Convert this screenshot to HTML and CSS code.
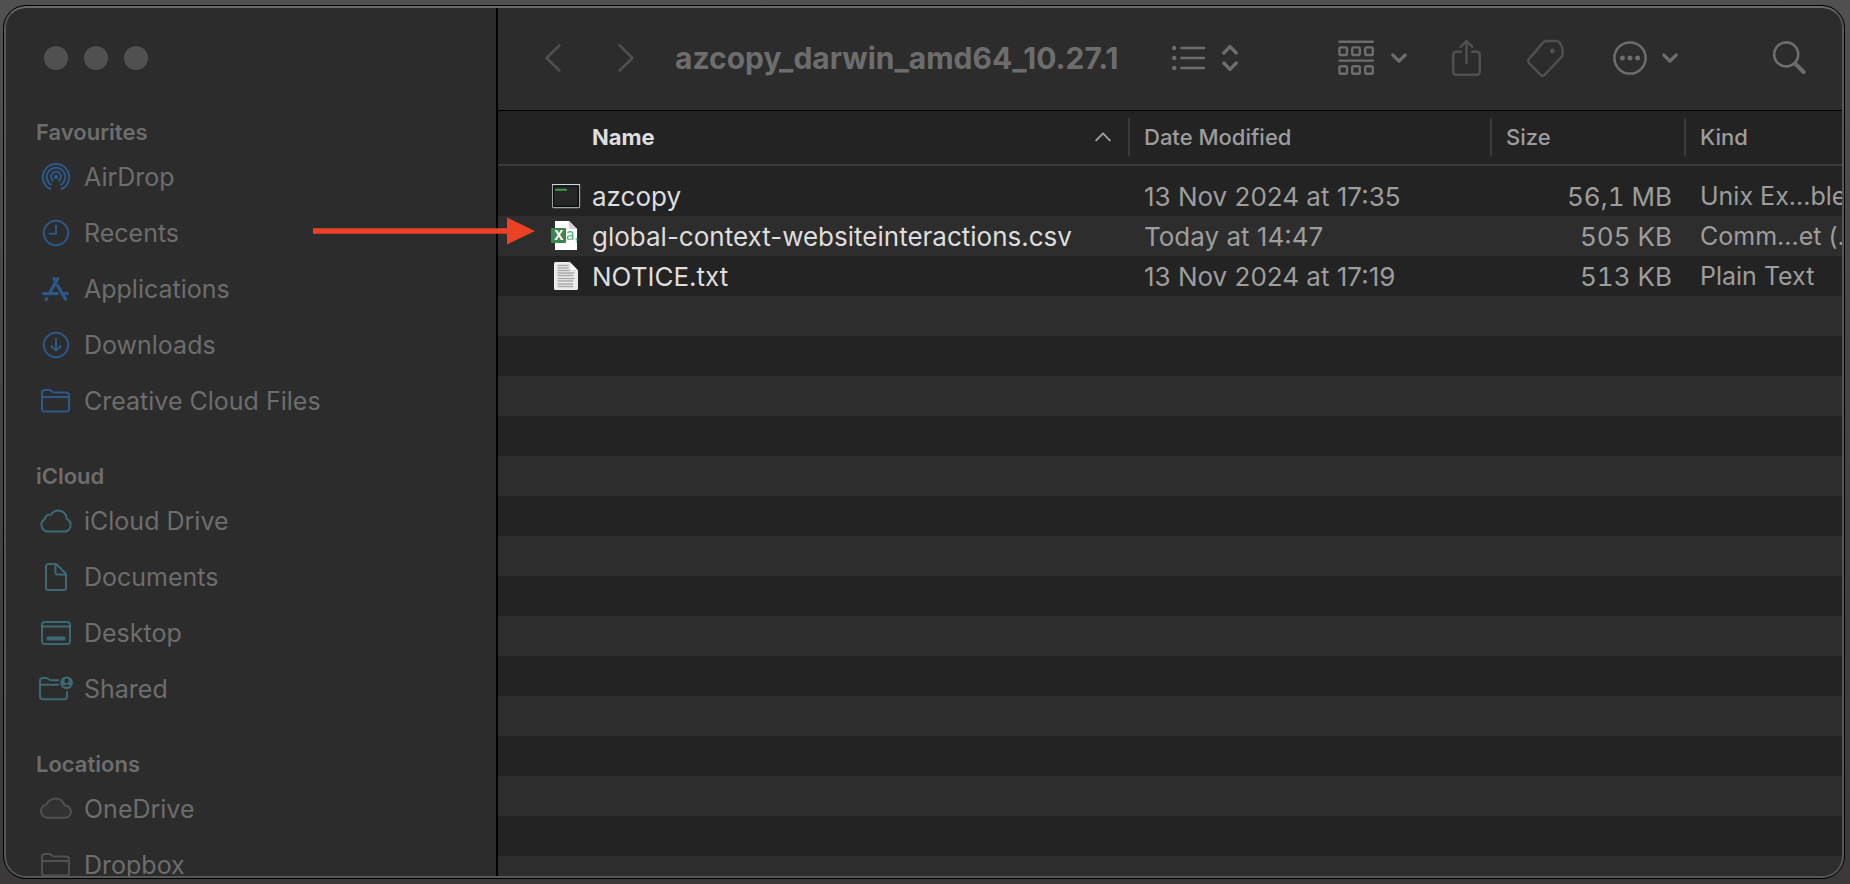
FILE: index.html
```html
<!DOCTYPE html>
<html lang="en">
<head>
<meta charset="utf-8">
<title>azcopy_darwin_amd64_10.27.1</title>
<link rel="stylesheet" href="styles.css">
</head>
<body>
<div class="window">
  <aside class="sidebar">
    <div class="traffic">
      <button class="light" type="button" aria-label="Close"></button>
      <button class="light" type="button" aria-label="Minimise"></button>
      <button class="light" type="button" aria-label="Zoom"></button>
    </div>
    <nav class="places">
      <section class="group blue">
        <h2 class="group-title">Favourites</h2>
        <a class="place" href="#"><svg class="place-icon" width="36" height="32" viewBox="0 0 36 32"><circle cx="18" cy="16" r="2.2" fill="currentColor" stroke="none"/><path d="M14.8 20a5 5 0 1 1 6.4 0M13 24.1a9.2 9.2 0 1 1 10 0M12.2 28.4a13.2 13.2 0 1 1 11.6 0" transform="translate(0 -.4)"/></svg>AirDrop</a>
        <a class="place" href="#"><svg class="place-icon" width="36" height="32" viewBox="0 0 36 32"><circle cx="18" cy="16" r="12.2"/><path d="M18 8.2v8.6h-6.6"/></svg>Recents</a>
        <a class="place" href="#"><svg class="place-icon" width="36" height="32" viewBox="0 0 36 32"><g stroke-width="3.2" stroke-linecap="round"><path d="M19.8 5.6 12 19.4M5.6 20.6h13.8M24.4 20.6h5M9 25.6 8 26.6M16 5.6l1.2 2"/><path d="m19.6 12.6 8 13.6"/></g></svg>Applications</a>
        <a class="place" href="#"><svg class="place-icon" width="36" height="32" viewBox="0 0 36 32"><circle cx="18" cy="16" r="12.2"/><path d="M18 10v11.4M13.2 17l4.8 4.6 4.8-4.6"/></svg>Downloads</a>
        <a class="place" href="#"><svg class="place-icon" width="36" height="32" viewBox="0 0 36 32"><path d="M4 24.6V7.6Q4 5 6.600 5H11Q12.400 5 13.400 6L14 6.600Q14.800 7.400 16 7.400H28.400Q31 7.400 31 10V24Q31 26.600 28.400 26.600H6.600Q4 26.600 4 24.600ZM4 12H31"/></svg>Creative Cloud Files</a>
      </section>
      <section class="group teal">
        <h2 class="group-title">iCloud</h2>
        <a class="place" href="#"><svg class="place-icon" width="36" height="32" viewBox="0 0 36 32"><path d="M9 26.400A6.600 6.600 0 0 1 7 14Q7.400 9.600 13.200 9.600Q15.600 5.400 20.200 5.400Q28.400 6 28.800 14.200A6.400 6.400 0 0 1 27.200 26.400Z"/></svg>iCloud Drive</a>
        <a class="place" href="#"><svg class="place-icon" width="36" height="32" viewBox="0 0 36 32"><path d="M10.600 3H18.200L28 12.800V26.400Q28 29 25.400 29H10.600Q8 29 8 26.400V5.600Q8 3 10.600 3ZM17.400 3V11.600Q17.400 13.400 19.200 13.400H28"/></svg>Documents</a>
        <a class="place" href="#"><svg class="place-icon" width="36" height="32" viewBox="0 0 36 32"><rect x="4" y="5" width="28" height="22" rx="3"/><path d="M4 9.600H32"/><rect x="8.600" y="19.400" width="18.800" height="4.200" rx="1" fill="currentColor" stroke="none"/></svg>Desktop</a>
        <a class="place" href="#"><svg class="place-icon" width="36" height="32" viewBox="0 0 36 32"><path d="M20.400 7.200H13Q11.600 7.200 10.800 6.400Q9.400 5 8 5H4.600Q2 5 2 7.600V23.800Q2 26.200 4.600 26.200H26.600Q29 26.200 29 23.600V19M2 11.800H20.400"/><circle cx="28.600" cy="9.800" r="6.400" fill="currentColor" stroke="none"/><circle cx="28.600" cy="7.800" r="2.200" fill="#2c2c2c" stroke="none"/><path d="M24.600 13.400Q28.600 9.400 32.600 13.400Z" fill="#2c2c2c" stroke="none"/></svg>Shared</a>
      </section>
      <section class="group grey">
        <h2 class="group-title">Locations</h2>
        <a class="place" href="#"><svg class="place-icon" width="36" height="32" viewBox="0 0 36 32"><path d="M9 24.800A6.800 6.800 0 0 1 8.400 11.400Q11.600 5.400 17.800 5.400Q24.600 5.600 26.800 12.600A6.100 6.100 0 0 1 27 24.800Z" fill="#323232"/></svg>OneDrive</a>
        <a class="place" href="#"><svg class="place-icon" width="36" height="32" viewBox="0 0 36 32"><path d="M4 24.6V7.6Q4 5 6.600 5H11Q12.400 5 13.400 6L14 6.600Q14.800 7.400 16 7.400H28.400Q31 7.400 31 10V24Q31 26.600 28.400 26.600H6.600Q4 26.600 4 24.600ZM4 12H31"/></svg>Dropbox</a>
      </section>
    </nav>
  </aside>
  <main class="main">
    <header class="toolbar">
      <div class="history">
        <button class="tool dim" type="button" aria-label="Back"><svg width="18" height="30" viewBox="0 0 18 30"><path d="M15.400 2.400 2.600 15l12.800 12.600" stroke-width="2.600"/></svg></button>
        <button class="tool dim" type="button" aria-label="Forward"><svg width="18" height="30" viewBox="0 0 18 30"><path d="M2.600 2.400 15.400 15 2.600 27.600" stroke-width="2.600"/></svg></button>
      </div>
      <h1 class="title">azcopy_darwin_amd64_10.27.1</h1>
      <button class="tool view" type="button" aria-label="View as list">
        <svg width="35" height="30" viewBox="0 0 35 30"><g fill="currentColor" stroke="none"><circle cx="3.200" cy="5" r="2.200"/><circle cx="3.200" cy="15" r="2.200"/><circle cx="3.200" cy="25" r="2.200"/></g><path d="M10.400 5H33M10.400 15H33M10.400 25H33" stroke-width="2.400"/></svg>
        <svg width="18" height="30" viewBox="0 0 18 30"><path d="m2.800 10 6.200-6.400L15.200 10M2.800 20l6.200 6.400L15.200 20" stroke-width="3.400"/></svg>
      </button>
      <button class="tool arrange" type="button" aria-label="Group by">
        <svg width="37" height="36" viewBox="0 0 37 36"><path d="M1.400 1.800H35M1.400 20.600H35" stroke-width="2.400"/><g stroke-width="2.400"><rect x="1.400" y="7.400" width="7.600" height="7.600" rx="1.600"/><rect x="14.200" y="7.400" width="7.600" height="7.600" rx="1.600"/><rect x="27.200" y="7.400" width="7.600" height="7.600" rx="1.600"/><rect x="1.400" y="26.200" width="7.600" height="7.600" rx="1.600"/><rect x="14.200" y="26.200" width="7.600" height="7.600" rx="1.600"/><rect x="27.200" y="26.200" width="7.600" height="7.600" rx="1.600"/></g></svg>
        <svg width="18" height="12" viewBox="0 0 18 12"><path d="m2.800 3 6.200 6.200L15.200 3" stroke-width="3.200"/></svg>
      </button>
      <button class="tool dim share" type="button" aria-label="Share"><svg width="31" height="38" viewBox="0 0 31 38"><path d="M10 12.800H5.400Q2.200 12.800 2.200 16V32.600Q2.200 35.800 5.400 35.800H25.600Q28.800 35.800 28.800 32.600V16Q28.800 12.800 25.600 12.800H21M15.500 24V2.400M9.600 7.800l5.900-5.800 5.900 5.800" stroke-width="2.400"/></svg></button>
      <button class="tool dim tag" type="button" aria-label="Edit tags"><svg width="39" height="40" viewBox="0 0 39 40"><path d="M20 3H30Q32 3 33.400 4.400L35.400 8Q36.600 9.600 36.600 12V16.400Q36.600 18 35.200 19.400L18.400 37Q16.600 38.400 14.800 37L2.800 24.800Q1.400 23 2.800 21.200L17.200 4.400Q18.400 3 20 3Z" stroke-width="2.400"/><circle cx="26.400" cy="13" r="2.400" fill="currentColor" stroke="none"/></svg></button>
      <button class="tool more" type="button" aria-label="Actions">
        <svg width="36" height="36" viewBox="0 0 36 36"><circle cx="18" cy="18" r="15.600" stroke-width="2.500"/><g fill="currentColor" stroke="none"><circle cx="10.400" cy="18" r="2.500"/><circle cx="18" cy="18" r="2.500"/><circle cx="25.600" cy="18" r="2.500"/></g></svg>
        <svg width="18" height="12" viewBox="0 0 18 12"><path d="m2.800 3 6.200 6.200L15.200 3" stroke-width="3.200"/></svg>
      </button>
      <button class="tool search" type="button" aria-label="Search"><svg width="34" height="36" viewBox="0 0 34 36"><circle cx="14.200" cy="14.400" r="12" stroke-width="2.600"/><path d="m23 23.400 8.600 8.600" stroke-width="4"/></svg></button>
    </header>
    <div class="list">
      <table class="files">
        <thead>
          <tr>
            <th class="col-name" scope="col"><div class="head sorted">Name<svg width="16" height="10" viewBox="0 0 16 10"><path d="m1.200 8.400 6.800-7 6.800 7" stroke-width="2"/></svg></div></th>
            <th class="col-date" scope="col"><div class="head split">Date Modified</div></th>
            <th class="col-size" scope="col"><div class="head split">Size</div></th>
            <th class="col-kind" scope="col"><div class="head split">Kind</div></th>
          </tr>
        </thead>
        <tbody>
          <tr>
            <td><div class="file"><svg class="file-icon" width="30" height="32" viewBox="0 0 30 32"><rect x="1.600" y="4.600" width="27" height="23" rx="1" fill="#1e1e1e" stroke="#9aa5a8" stroke-width="1.200"/><path d="M1.400 4.500H28.600" stroke="#c9dbe0" stroke-width="1.200"/><rect x="3" y="6" width="24.200" height="20.200" fill="#262626" stroke="#050505" stroke-width="1"/><path d="M5 9.700H15.600" stroke="#459a4b" stroke-width="2" stroke-dasharray="1.800 1"/></svg>azcopy</div></td>
            <td class="meta date">13 Nov 2024 at 17:35</td>
            <td class="meta size">56,1 MB</td>
            <td class="meta kind">Unix Ex...ble</td>
          </tr>
          <tr>
            <td><div class="file"><svg class="file-icon" width="30" height="32" viewBox="0 0 30 32"><path d="M4 1H18L26 9V30H4Z" fill="#fff"/><path d="M18 1 26 9H20Q18 9 18 7Z" fill="#d4d4d4"/><text x="15" y="20" class="glyph-a">a,</text><rect x="0" y="8" width="15" height="15" rx="1" fill="#3a8550"/><text x="3" y="20" class="glyph-x">X</text></svg>global-context-websiteinteractions.csv</div></td>
            <td class="meta date">Today at 14:47</td>
            <td class="meta size">505 KB</td>
            <td class="meta kind">Comm...et (.</td>
          </tr>
          <tr>
            <td><div class="file"><svg class="file-icon" width="30" height="32" viewBox="0 0 30 32"><path d="M4.500 2H18.600L27 10.400V28.500Q27 30 25.500 30H4.500Q3 30 3 28.500V3.500Q3 2 4.500 2Z" fill="#ececec"/><path d="M18.600 2 27 10.400H20.200Q18.600 10.400 18.600 8.800Z" fill="#fff" stroke="#bdbdbd" stroke-width=".6"/><path d="M7 5.500H17M7 8H17M7 10.500H18M7 13H23M7 15.500H22M7 18.500H23M7 21H22M7 24H22M7 26.500H22" stroke="#aaa" stroke-width="1.300" stroke-dasharray="4 .6 2.500 .5"/></svg>NOTICE.txt</div></td>
            <td class="meta date">13 Nov 2024 at 17:19</td>
            <td class="meta size">513 KB</td>
            <td class="meta kind">Plain Text</td>
          </tr>
        </tbody>
      </table>
    </div>
  </main>
  <svg class="arrow" width="222" height="28" viewBox="0 0 222 28" aria-hidden="true"><path d="M0 11.200H194V.500L222 14 194 27.500V16.800H0Z"/></svg>
</div>
</body>
</html>
```
FILE: styles.css
```css
* {
  box-sizing: border-box;
}

body {
  margin: 0;
  padding: 5px 5px 5px 3px;
  height: 100vh;
  overflow: hidden;
  display: flex;
  background: linear-gradient(#505050, #434343 50%, #3b393a);
  color: #6d6d6d;
  font-family: Inter, "Liberation Sans", sans-serif;
  font-size: 25px;
}

svg {
  display: block;
  flex: none;
  fill: none;
  stroke: currentColor;
  stroke-linecap: round;
  stroke-linejoin: round;
}

.window {
  position: relative;
  flex: 1;
  display: flex;
  min-width: 0;
  overflow: hidden;
  border: 1px solid #000;
  border-radius: 23px;
  background: #2c2c2c;
}

/* Light rim drawn over the window's content */
.window::after {
  content: "";
  position: absolute;
  inset: 0;
  border: 2px solid #575757;
  border-top-color: #6a6a6a;
  border-radius: 22px;
  pointer-events: none;
}

.sidebar {
  flex: none;
  width: 494px;
  border-right: 2px solid #000;
}

.traffic {
  display: flex;
  gap: 16px;
  padding: 40px 40px 45px;
}

.light {
  width: 24px;
  height: 24px;
  padding: 0;
  border: 0;
  border-radius: 50%;
  background: #505050;
}

.places {
  display: flex;
  flex-direction: column;
  gap: 30px;
  padding-left: 32px;
}

.group-title {
  margin: 0;
  font-size: 22px;
  font-weight: 600;
  line-height: 34px;
}

.place {
  display: flex;
  align-items: center;
  gap: 10px;
  height: 56px;
  padding-left: 2px;
  color: inherit;
  text-decoration: none;
}

.place-icon {
  stroke-width: 2;
}

.blue .place-icon {
  color: #2c588a;
}

.teal .place-icon {
  color: #3c6a72;
}

.grey .place-icon {
  color: #505050;
}

.main {
  flex: 1;
  min-width: 0;
  display: flex;
  flex-direction: column;
}

.toolbar {
  display: flex;
  align-items: center;
  height: 105px;
  padding: 0 38px 1px 46px;
  border-bottom: 1px solid #000;
}

.history {
  display: flex;
  gap: 55px;
}

.title {
  flex: 1;
  min-width: 0;
  margin: 0 0 0 40px;
  font-size: 30px;
  font-weight: 700;
  line-height: 40px;
  white-space: nowrap;
}

.tool {
  display: flex;
  align-items: center;
  gap: 15px;
  padding: 0;
  border: 0;
  background: none;
  color: #6d6d6d;
}

.dim {
  color: #505050;
}

.arrange {
  margin-left: 99px;
}

.share {
  margin-left: 43px;
}

.tag {
  margin-left: 44px;
}

.more {
  margin-left: 47px;
  gap: 13px;
}

.search {
  margin-left: 93px;
}

/* Stripes begin under the column header and its 10px gap */
.list {
  flex: 1;
  overflow: hidden;
  background: #232323 repeating-linear-gradient(#232323 0 40px, #2d2d2d 40px 80px) no-repeat 0 65px;
}

.files {
  width: 100%;
  table-layout: fixed;
  border-collapse: separate;
  border-spacing: 0;
  white-space: nowrap;
}

.files tbody::before {
  content: "";
  display: block;
  height: 10px;
}

.files th {
  height: 55px;
  padding: 0 0 2px;
  border-bottom: 2px solid #3b3b3b;
  font-size: 22px;
  font-weight: 500;
  text-align: left;
}

.files td {
  height: 40px;
  padding: 0;
  font-size: 26px;
}

.col-date {
  width: 362px;
}

.col-size {
  width: 194px;
}

.col-kind {
  width: 160px;
}

.head {
  display: flex;
  align-items: center;
  height: 38px;
  color: #9d9d9d;
}

.sorted {
  justify-content: space-between;
  padding: 0 17px 0 94px;
  font-weight: 700;
  color: #dedede;
}

.sorted svg {
  color: #9d9d9d;
}

.split {
  padding-left: 14px;
  border-left: 2px solid #3a3a3a;
}

.file {
  display: flex;
  align-items: center;
  gap: 11px;
  padding-left: 53px;
  color: #dedede;
}

.file-icon {
  stroke: none;
}

.glyph-a {
  fill: #4fbb7b;
  font-family: Lato, sans-serif;
  font-size: 17px;
}

.glyph-x {
  fill: #fff;
  font-size: 13px;
  font-weight: 700;
}

.files .meta {
  padding-left: 16px;
  color: #9d9d9d;
}

.files .size {
  padding: 0 12px 0 0;
  text-align: right;
  font-variant-numeric: tabular-nums;
}

.files .kind {
  font-size: 25px;
}

/* Annotation arrow that points at the CSV file */
.arrow {
  position: absolute;
  left: 309px;
  top: 211px;
  fill: #eb4125;
  stroke: none;
}
```
